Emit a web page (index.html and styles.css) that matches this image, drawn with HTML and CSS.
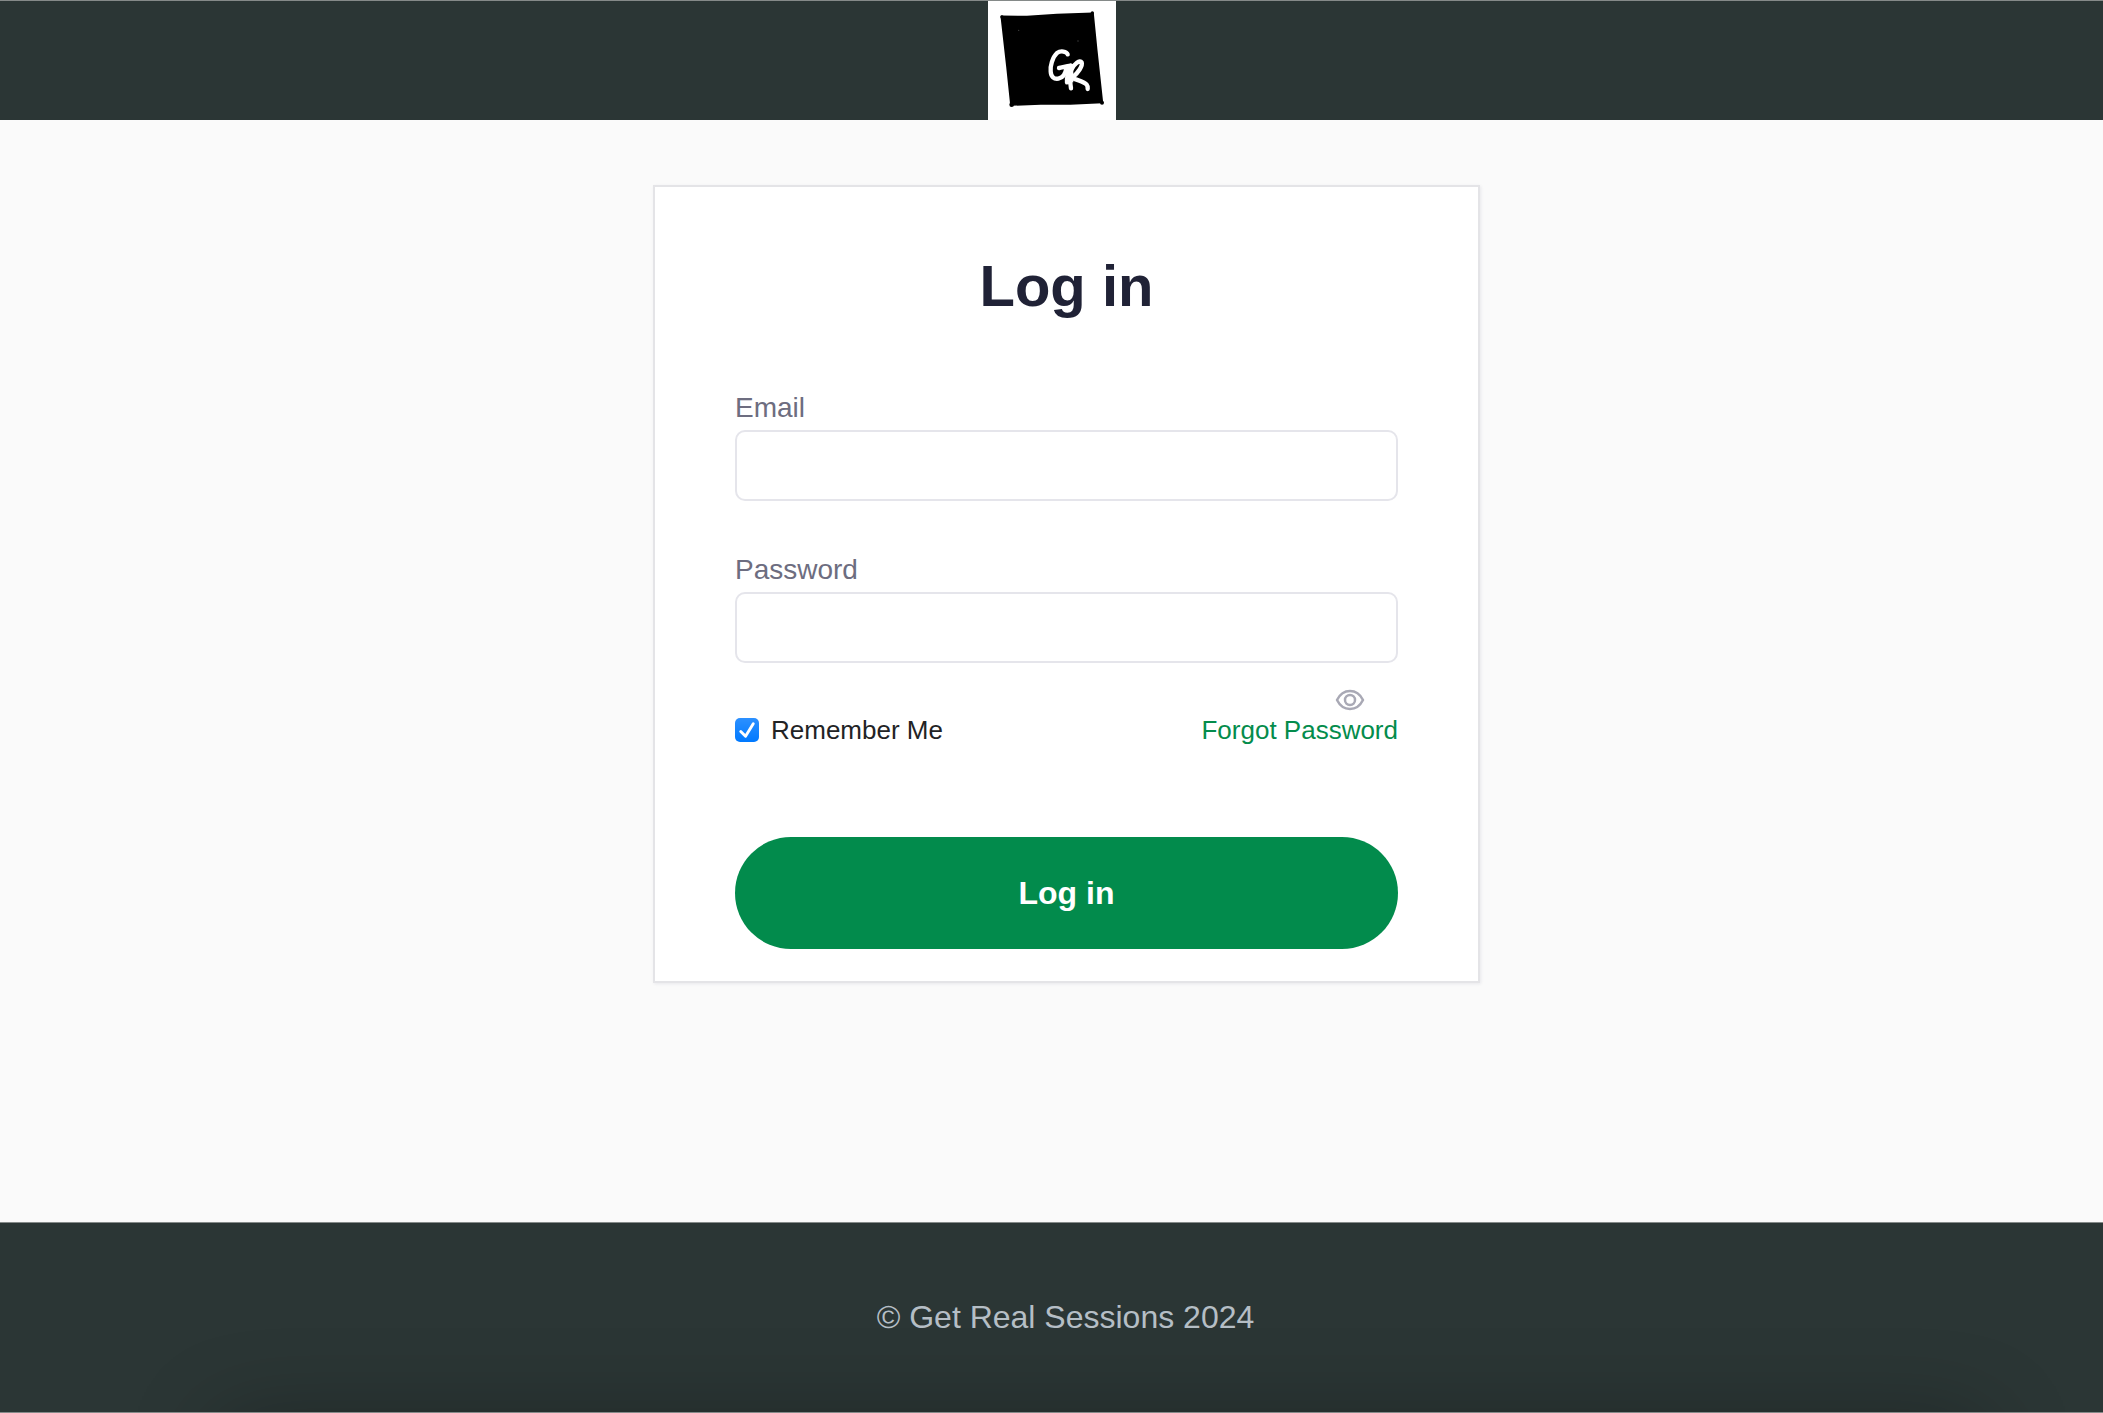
FILE: index.html
```
<!DOCTYPE html>
<html lang="en">
<head>
    <meta charset="UTF-8">
    <meta name="viewport" content="width=device-width, initial-scale=1.0">
    <title>Log in</title>
    <link rel="stylesheet" href="styles.css">
</head>
<body>
    <header class="header">
        <a href="#" class="logo" aria-label="Get Real Sessions">
            <svg viewBox="53 3 384 357" width="128" height="119">
                <path d="M93 49 L170 50 L260 44 L368 40 L379 150 L396 307 L300 312 L230 311 L122 315 L110 200 Z" fill="#000" stroke="#000" stroke-width="5" stroke-linejoin="round"/>
                <circle cx="95" cy="51" r="5"/>
                <circle cx="366" cy="39" r="5"/>
                <circle cx="395" cy="308" r="6"/>
                <circle cx="124" cy="314" r="7"/>
                <g fill="none" stroke="#fff" stroke-width="13" stroke-linecap="round" stroke-linejoin="round">
                    <path d="M292 163 C289 154 271 151 260 159 C246 172 239 200 241 214 C242 231 251 238 264 236 C277 233 286 220 288 203 M266 204 C277 202 288 198 301 197"/>
                    <path d="M302 197 C294 216 288 234 290 247 M301 202 C299 226 299 248 302 265 M302 211 C311 190 329 179 334 187 C338 198 323 218 307 232 C300 238 291 238 292 243 M307 234 C323 242 341 244 349 254 C353 259 352 264 352 267"/>
                </g>
                <path d="M290 205 L309 205 L309 247 L288 247 Z" fill="#fff"/>
                <circle cx="145" cy="91" r="2" fill="#444"/>
                <circle cx="323" cy="123" r="2" fill="#444"/>
            </svg>
        </a>
    </header>

    <main class="main">
        <form class="card">
            <h1 class="title">Log in</h1>

            <div class="field">
                <label for="email">Email</label>
                <input type="email" id="email" name="email">
            </div>

            <div class="field">
                <label for="password">Password</label>
                <input type="password" id="password" name="password">
            </div>

            <button type="button" class="eye" aria-label="Show password">
                <svg viewBox="0 0 30 22" width="30" height="22" fill="none" stroke="#a9a9b5" stroke-width="2.500">
                    <path d="M2 11 C8 -1 22 -1 28 11 C22 23 8 23 2 11 Z" stroke-linejoin="round"/>
                    <circle cx="15" cy="11" r="5"/>
                </svg>
            </button>

            <div class="options">
                <label class="remember" for="remember">
                    <input type="checkbox" id="remember" name="remember" checked>
                    Remember Me
                </label>
                <a href="#" class="forgot">Forgot Password</a>
            </div>

            <button type="submit" class="submit">Log in</button>
        </form>
    </main>

    <footer class="footer">
        <p>© Get Real Sessions 2024</p>
    </footer>

    <script>
        // show / hide password
        var password = document.querySelector("#password");
        document.querySelector(".eye").onclick = function(){
            password.type = password.type == "password" ? "text" : "password";
        }
    </script>
</body>
</html>
```
FILE: styles.css
```
*{
    margin: 0;
    padding: 0;
    box-sizing: border-box;
}
body{
    display: flex;
    flex-direction: column;
    min-height: 100vh;
    background-color: #fafafa;
    font-family: "Liberation Sans", Arial, sans-serif;
    color: #222325;
}

/* header */
.header{
    display: flex;
    justify-content: center;
    background-color: #2b3635;
    border-top: 1px solid #858a89;
}
.logo{
    display: block;
    background-color: white;
}
.logo svg{
    display: block;
}

/* login card */
.main{
    flex: 1;
    padding: 65px 0 65px 30px;
}
.card{
    display: flex;
    flex-direction: column;
    max-width: 827px;
    margin: 0 auto;
    padding: 64px 80px 32px;
    background-color: white;
    border: 2px solid #e4e4e7;
    box-shadow: 1px 1px 3px rgba(30, 30, 80, 0.08);
}
.title{
    margin-bottom: 71px;
    font-size: 58px;
    line-height: 70px;
    text-align: center;
    color: #202236;
}
.field{
    display: flex;
    flex-direction: column;
    gap: 6px;
}
.field + .field{
    margin-top: 53px;
}
.field label{
    font-size: 28px;
    line-height: 32px;
    color: #6d6d80;
}
.field input{
    width: 100%;
    height: 71px;
    padding: 0 20px;
    font-family: inherit;
    font-size: 28px;
    background-color: white;
    border: 2px solid #e5e5eb;
    border-radius: 10px;
}
.eye{
    align-self: flex-end;
    height: 22px;
    margin: 26px 33px 3px 0;
    background: none;
    border: none;
    cursor: pointer;
}
.eye svg{
    display: block;
}
.options{
    display: flex;
    justify-content: space-between;
    margin-bottom: 91px;
    font-size: 26px;
    line-height: 32px;
}
.remember{
    display: flex;
    align-items: center;
    gap: 12px;
}
.remember input{
    appearance: none;
    width: 24px;
    height: 24px;
    border: 1px solid #b5b5b5;
    border-radius: 5px;
}
.remember input:checked{
    border: none;
    background: url('data:image/svg+xml,<svg xmlns="http://www.w3.org/2000/svg" viewBox="0 0 25 25"><path d="M6 14l5 5 8-13" fill="none" stroke="white" stroke-width="3" stroke-linecap="round" stroke-linejoin="round"/></svg>'), linear-gradient(#2c90ff, #0079ff);
}
.forgot{
    color: #048c4c;
    text-decoration: none;
}
.submit{
    height: 112px;
    font-family: inherit;
    font-size: 32px;
    font-weight: bold;
    color: white;
    background-color: #028b4c;
    border: none;
    border-radius: 56px;
    cursor: pointer;
}

/* footer */
.footer{
    position: relative;
    overflow: hidden;
    padding: 76px 0 77px 28px;
    font-size: 32px;
    line-height: 36px;
    text-align: center;
    color: #b5bec5;
    background-color: #2b3635;
    border-top: 1px solid #858a89;
    border-bottom: 1px solid #858a89;
}
.footer::after{
    content: "";
    position: absolute;
    top: 100%;
    left: 220px;
    right: 120px;
    height: 100px;
    box-shadow: 0 10px 90px rgba(0, 0, 0, 0.3);
}
```
